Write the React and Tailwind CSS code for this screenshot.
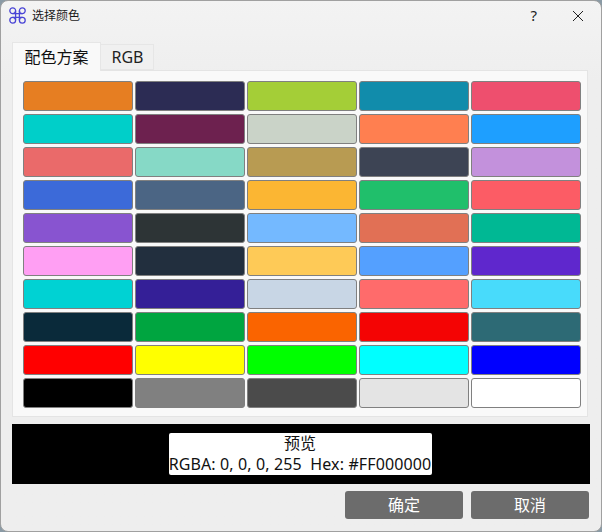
const ROWS = [
  ["#e67e22", "#2c2c54", "#a4ce37", "#118cab", "#ee4f6e"],
  ["#00cfc9", "#6d214f", "#cad3c8", "#ff7f50", "#1e9fff"],
  ["#ea6a6a", "#86d9c6", "#b89b52", "#3d4454", "#c391dc"],
  ["#3c6ad9", "#4b6584", "#fbb633", "#20bf6b", "#fc5c65"],
  ["#8854d0", "#2d3436", "#74b9ff", "#e17055", "#00b894"],
  ["#ff9ff3", "#222f3e", "#feca57", "#54a0ff", "#5f27cd"],
  ["#00d2d3", "#341f97", "#c8d6e5", "#ff6b6b", "#48dbfb"],
  ["#0a2a3a", "#00a540", "#fa6400", "#f40404", "#2d6a75"],
  ["#ff0000", "#ffff00", "#00ff00", "#00ffff", "#0000ff"],
  ["#000000", "#808080", "#4b4b4b", "#e4e4e4", "#ffffff"],
];

function Logo() {
  return (
    <svg width="17" height="17" viewBox="0 0 17 17" fill="none" stroke="#4a45d6" strokeWidth="1.3">
      <circle cx="3.7" cy="3.7" r="2.9" />
      <circle cx="13.3" cy="3.7" r="2.9" />
      <circle cx="3.7" cy="13.3" r="2.9" />
      <circle cx="13.3" cy="13.3" r="2.9" />
      <path d="M6.6 3.7v9.6M10.4 3.7v9.6M3.7 6.6h9.6M3.7 10.4h9.6" />
    </svg>
  );
}

export default function App() {
  return (
    <div
      className="w-[602px] h-[532px] bg-[#8a9aa5] overflow-hidden"
      style={{ fontFamily: '"Noto Sans", "Noto Sans CJK SC", sans-serif' }}
    >
      <div className="w-full h-full flex flex-col rounded-[8px] border border-[#a0a0a0] bg-gradient-to-b from-[#f3f3f3] to-[#eeeeee] to-[15%] overflow-hidden">
        <div className="h-[29px] shrink-0 flex items-center pl-[8px] pr-[16px]">
          <Logo />
          <span className="ml-[6px] text-[12px] text-[#1a1a1a]">选择颜色</span>
          <span className="ml-auto mr-[35px] text-[15px] leading-none text-[#222]">?</span>
          <svg width="12" height="12" viewBox="0 0 12 12" stroke="#222" strokeWidth="1" className="mr-[1px]">
            <path d="M1 1l10 10M11 1L1 11" />
          </svg>
        </div>
        <div className="ml-[11px] mt-[12px] flex items-end h-[28px] relative z-10">
          <div className="h-[29px] mb-[-1px] w-[89px] flex items-center justify-center bg-[#f9f9f9] border border-b-0 border-[#e6e6e6] text-[16px] text-[#111]">
            配色方案
          </div>
          <div className="h-[26px] w-[53px] pl-[1px] flex items-center justify-center bg-[#f0f0f0] border border-l-0 border-[#e6e6e6] text-[16px] text-[#222]">
            RGB
          </div>
        </div>
        <div className="ml-[11px] w-[576px] h-[347px] bg-[#f9f9f9] border border-[#e4e4e4] pt-[10px] pl-[10px] pr-[6px]">
          <div className="grid grid-cols-5 gap-x-[2px] gap-y-[3px]">
            {ROWS.flat().map((c, i) => (
              <div
                key={i}
                className="h-[30px] rounded-[3px] border border-[#808080]"
                style={{ backgroundColor: c }}
              />
            ))}
          </div>
        </div>
        <div className="mx-[11px] mt-[7px] h-[60px] bg-black flex items-center justify-center pr-[2px]">
          <div className="w-[263px] h-[42px] bg-white rounded-[2px] flex flex-col items-center justify-center text-[16px] leading-[21px] tracking-[0.12px] text-[#111] whitespace-pre">
            <span>预览</span>
            <span>RGBA: 0, 0, 0, 255  Hex: #FF000000</span>
          </div>
        </div>
        <div className="flex justify-end gap-[8px] mt-[7px] mr-[12px]">
          <button className="w-[118px] h-[28px] rounded-[3px] bg-[#6c6c6c] text-white text-[16px]">确定</button>
          <button className="w-[118px] h-[28px] rounded-[3px] bg-[#6c6c6c] text-white text-[16px]">取消</button>
        </div>
      </div>
    </div>
  );
}
